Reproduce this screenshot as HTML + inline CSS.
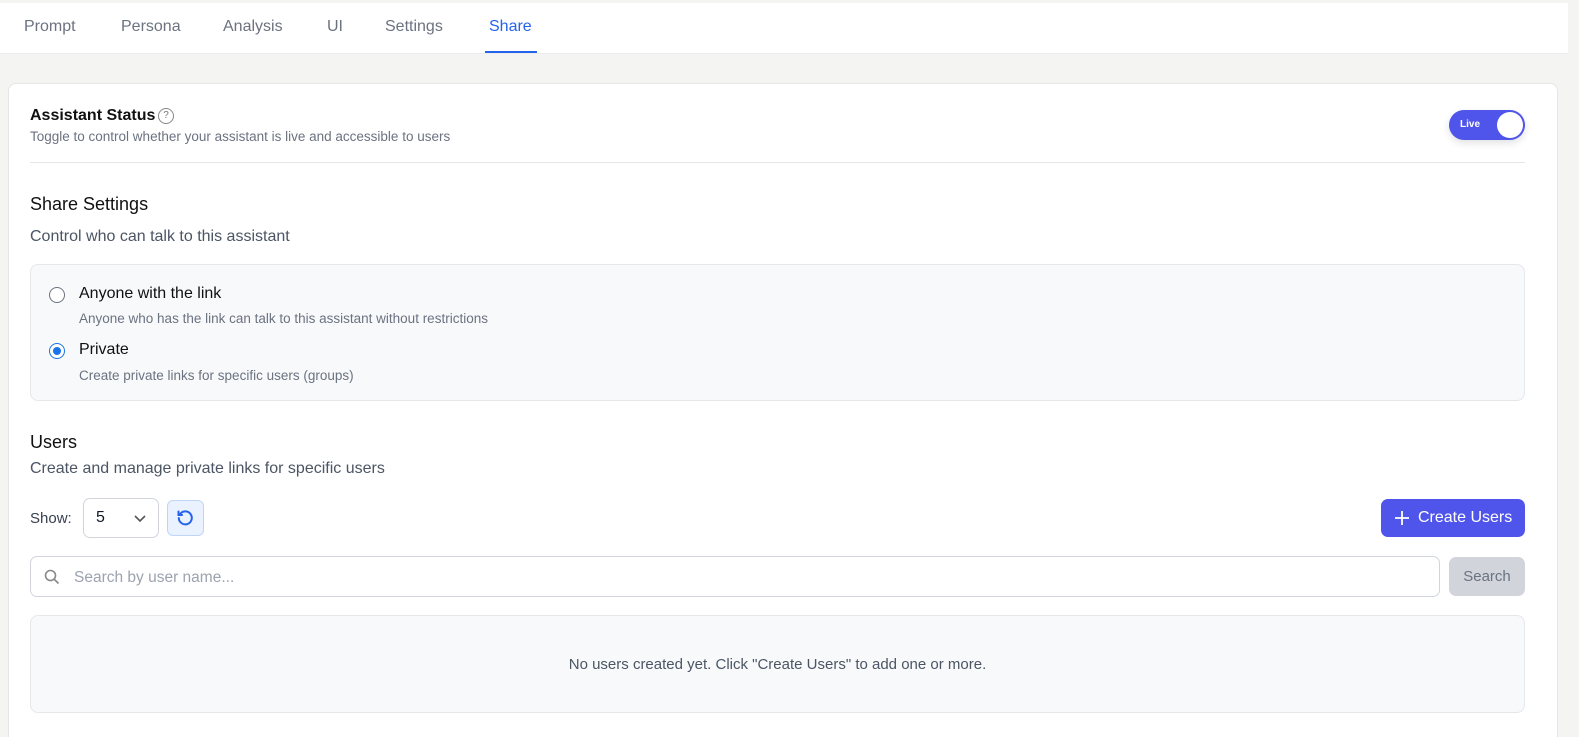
<!DOCTYPE html>
<html><head><meta charset="utf-8"><style>
*{box-sizing:border-box;margin:0;padding:0}
html,body{width:1579px;height:737px;overflow:hidden}
body{background:#f4f4f2;font-family:"Liberation Sans",sans-serif;position:relative;color:#111827}
.abs{position:absolute}
.nav{left:0;top:3px;width:1568px;height:51px;background:#fff;border-bottom:1px solid #ececec}
.tab{top:18px;font-size:16px;color:#6b7280}
.card{left:8px;top:83px;width:1550px;height:680px;background:#fff;border:1px solid #e6e6e6;border-radius:8px}
.radio{width:16px;height:16px;border-radius:50%;border:1.5px solid #6b7280;background:#fff}
</style></head><body>
<div class="abs nav"></div>
<div class="abs tab" style="left:24px">Prompt</div>
<div class="abs tab" style="left:121px">Persona</div>
<div class="abs tab" style="left:223px">Analysis</div>
<div class="abs tab" style="left:327px">UI</div>
<div class="abs tab" style="left:385px">Settings</div>
<div class="abs tab" style="left:489px;color:#2563eb">Share</div>
<div class="abs" style="left:485px;top:51px;width:52px;height:2px;background:#2563eb"></div>

<div class="abs card"></div>
<div class="abs" style="left:30px;top:107px;font-size:16px;font-weight:bold;color:#111">Assistant Status</div>
<div class="abs" style="left:158px;top:108px;width:16px;height:16px;border:1px solid #888;border-radius:50%;font-size:10px;color:#777;text-align:center;line-height:14px">?</div>
<div class="abs" style="left:30px;top:129px;font-size:13.5px;color:#6b7280">Toggle to control whether your assistant is live and accessible to users</div>
<div class="abs" style="left:1449px;top:110px;width:76px;height:30px;background:#4f55ea;border-radius:15px;box-shadow:0 3px 8px rgba(0,0,0,.12)"></div>
<div class="abs" style="left:1460px;top:119px;font-size:10px;color:#fff;font-weight:bold">Live</div>
<div class="abs" style="left:1497px;top:112px;width:26px;height:26px;background:#fff;border-radius:50%"></div>
<div class="abs" style="left:30px;top:162px;width:1495px;height:1px;background:#e5e5e5"></div>

<div class="abs" style="left:30px;top:194px;font-size:18px;color:#111">Share Settings</div>
<div class="abs" style="left:30px;top:228px;font-size:16px;color:#4b5563">Control who can talk to this assistant</div>
<div class="abs" style="left:30px;top:264px;width:1495px;height:137px;background:#f8f9fb;border:1px solid #e5e7eb;border-radius:8px"></div>
<div class="abs radio" style="left:49px;top:287px"></div>
<div class="abs" style="left:79px;top:285px;font-size:16px;color:#111">Anyone with the link</div>
<div class="abs" style="left:79px;top:311px;font-size:13.5px;color:#6b7280">Anyone who has the link can talk to this assistant without restrictions</div>
<div class="abs radio" style="left:49px;top:343px;border-color:#1a73e8"><div style="margin:2.5px;width:8px;height:8px;border-radius:50%;background:#1a73e8"></div></div>
<div class="abs" style="left:79px;top:341px;font-size:16px;color:#111">Private</div>
<div class="abs" style="left:79px;top:368px;font-size:13.5px;color:#6b7280">Create private links for specific users (groups)</div>

<div class="abs" style="left:30px;top:432px;font-size:18px;color:#111">Users</div>
<div class="abs" style="left:30px;top:460px;font-size:16px;color:#4b5563">Create and manage private links for specific users</div>
<div class="abs" style="left:30px;top:510px;font-size:15px;color:#374151">Show:</div>
<div class="abs" style="left:83px;top:498px;width:76px;height:40px;border:1px solid #d1d5db;border-radius:7px"></div>
<div class="abs" style="left:96px;top:509px;font-size:16px">5</div>
<svg class="abs" style="left:133px;top:513px" width="14" height="10"><path d="M2 3l5 5 5-5" fill="none" stroke="#555" stroke-width="1.6"/></svg>
<div class="abs" style="left:167px;top:500px;width:37px;height:36px;background:#eaf2ff;border:1px solid #bfd5f7;border-radius:6px"></div>
<svg class="abs" style="left:175px;top:508px" width="20" height="20" viewBox="0 0 20 20"><path d="M5.5 5.5A6.5 6.5 0 1 1 3.8 10" fill="none" stroke="#2563eb" stroke-width="2" stroke-linecap="round"/><path d="M3.5 3.5v3.5h3.5" fill="none" stroke="#2563eb" stroke-width="2" stroke-linecap="round"/></svg>
<div class="abs" style="left:1381px;top:499px;width:144px;height:38px;background:#4f55ea;border-radius:7px"></div>
<svg class="abs" style="left:1394px;top:510px" width="16" height="16"><path d="M8 1v14M1 8h14" stroke="#fff" stroke-width="1.8"/></svg>
<div class="abs" style="left:1418px;top:509px;font-size:16px;color:#fff">Create Users</div>

<div class="abs" style="left:30px;top:556px;width:1410px;height:41px;border:1px solid #d1d5db;border-radius:7px"></div>
<svg class="abs" style="left:44px;top:569px" width="16" height="16"><circle cx="6.5" cy="6.5" r="5" fill="none" stroke="#888" stroke-width="1.6"/><path d="M10.5 10.5l4 4" stroke="#888" stroke-width="1.6"/></svg>
<div class="abs" style="left:74px;top:569px;font-size:15.5px;color:#9ca3af">Search by user name...</div>
<div class="abs" style="left:1449px;top:557px;width:76px;height:39px;background:#d1d5db;border-radius:7px;font-size:15px;color:#6b7280;text-align:center;line-height:39px">Search</div>

<div class="abs" style="left:30px;top:615px;width:1495px;height:98px;background:#f8f9fb;border:1px solid #e5e7eb;border-radius:8px"></div>
<div class="abs" style="left:30px;top:656px;width:1495px;text-align:center;font-size:15px;color:#4b5563">No users created yet. Click "Create Users" to add one or more.</div>
</body></html>
